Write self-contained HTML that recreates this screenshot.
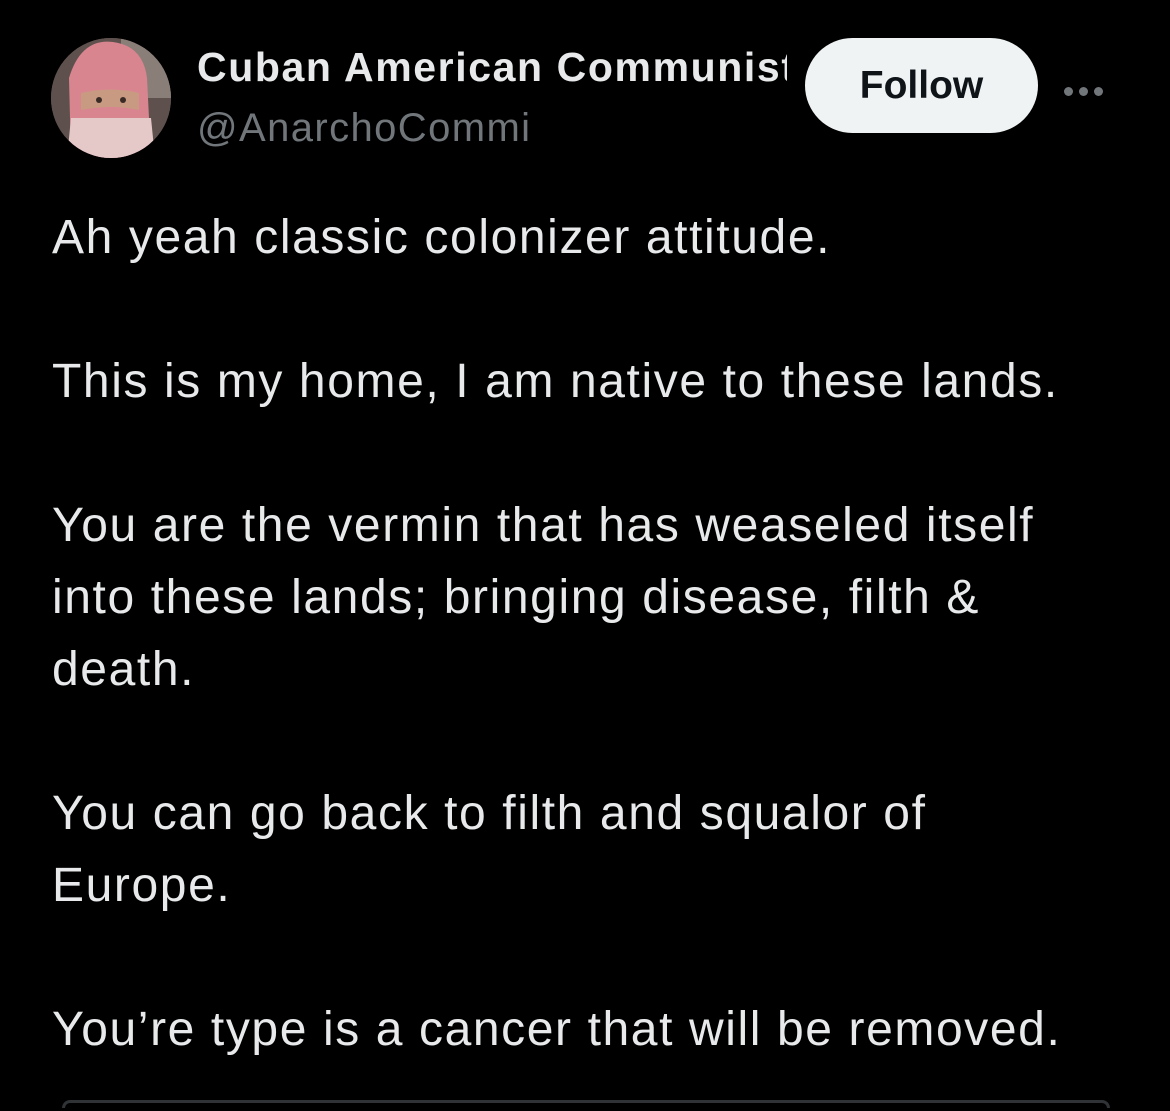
<!DOCTYPE html>
<html><head><meta charset="utf-8"><style>
html,body{margin:0;padding:0;background:#000;width:1170px;height:1111px;overflow:hidden;font-family:"Liberation Sans",sans-serif;position:relative;}
.av{position:absolute;left:51px;top:38px;width:120px;height:120px;border-radius:50%;overflow:hidden;background:#6b5a55;}
.name{position:absolute;left:197px;top:44px;font-size:41px;font-weight:bold;color:#e7e9ea;width:590px;white-space:nowrap;overflow:hidden;letter-spacing:1.6px;}
.handle{position:absolute;left:197px;top:106px;font-size:40px;color:#71767b;letter-spacing:1.4px;}
.follow{position:absolute;left:805px;top:38px;width:233px;height:95px;border-radius:48px;background:#eff3f4;color:#0f1419;font-weight:bold;font-size:39px;display:flex;align-items:center;justify-content:center;}
.dots{position:absolute;left:1064px;top:83px;}
.dots i{display:inline-block;width:9px;height:9px;border-radius:50%;background:#71767b;margin-right:6px;}
.body{position:absolute;left:52px;top:202px;width:1110px;height:880px;overflow:hidden;font-size:48px;line-height:72px;color:#e7e9ea;letter-spacing:1.6px;white-space:nowrap;}
.body p{margin:0 0 72px 0;}
.body p:last-child{margin:0;}
.card{position:absolute;left:62px;top:1100px;width:1042px;height:5px;border:3px solid #2f3336;border-bottom:none;border-radius:34px 34px 0 0;}
</style></head><body>
<div class="av"><svg width="120" height="120" viewBox="0 0 120 120">
<rect width="120" height="120" fill="#5d504d"/>
<rect x="70" y="0" width="50" height="60" fill="#8a7f78"/>
<path d="M20 120 L18 40 Q30 0 62 4 Q92 8 96 40 L100 120 Z" fill="#d9858f"/>
<path d="M30 55 Q60 48 88 55 L88 72 Q60 66 30 72 Z" fill="#c99a82"/>
<circle cx="48" cy="62" r="3" fill="#3a2a26"/><circle cx="72" cy="62" r="3" fill="#3a2a26"/>
<path d="M20 80 L100 80 L104 120 L16 120 Z" fill="#e5c9c9"/>
</svg></div>
<div class="name">Cuban American Communist</div>
<div class="handle">@AnarchoCommi</div>
<div class="follow">Follow</div>
<div class="dots"><i></i><i></i><i></i></div>
<div class="body">
<p>Ah yeah classic colonizer attitude.</p>
<p>This is my home, I am native to these lands.</p>
<p>You are the vermin that has weaseled itself<br>into these lands; bringing disease, filth &amp;<br>death.</p>
<p>You can go back to filth and squalor of<br>Europe.</p>
<p>You’re type is a cancer that will be removed.</p>
</div>
<div class="card"></div>
</body></html>
